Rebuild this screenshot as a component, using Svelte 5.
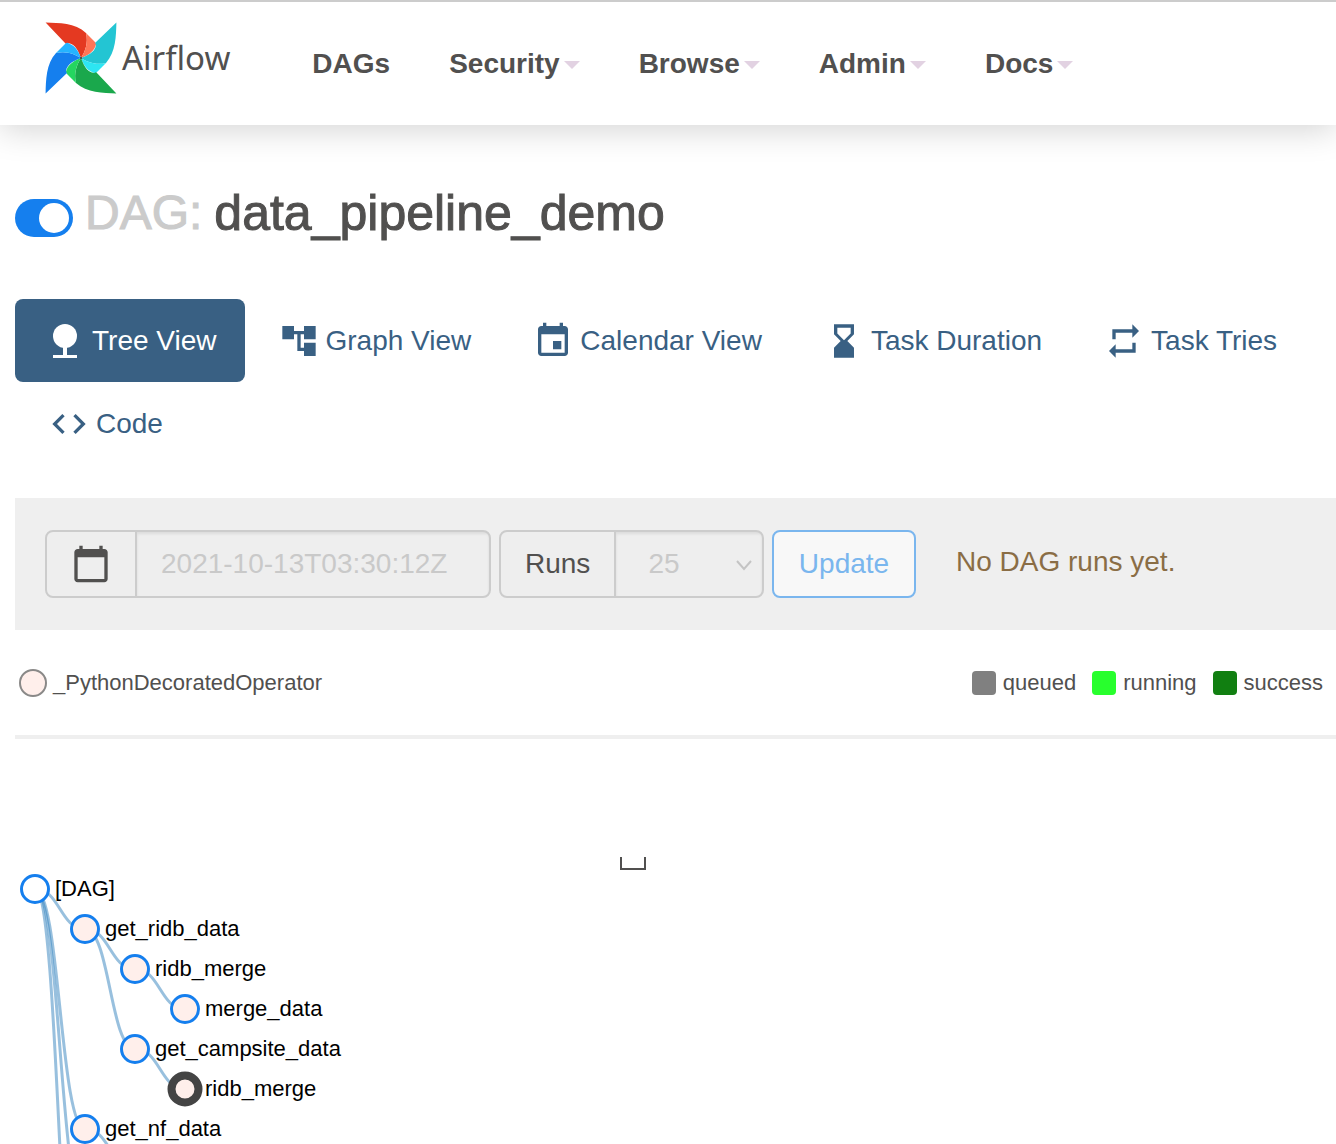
<script>
  const menus = [
    { label: 'DAGs', caret: false },
    { label: 'Security', caret: true },
    { label: 'Browse', caret: true },
    { label: 'Admin', caret: true },
    { label: 'Docs', caret: true },
  ];

  const blades = [
    { angle: 0, dark: '#e43921', light: '#ff7557' },
    { angle: 90, dark: '#23c5d3', light: '#2de5f2' },
    { angle: 180, dark: '#1aa84c', light: '#24d660' },
    { angle: 270, dark: '#157fee', light: '#25b4ff' },
  ];

  const tabs = [
    { id: 'tree', label: 'Tree View', active: true },
    { id: 'graph', label: 'Graph View' },
    { id: 'calendar', label: 'Calendar View' },
    { id: 'duration', label: 'Task Duration' },
    { id: 'tries', label: 'Task Tries' },
    { id: 'code', label: 'Code' },
  ];

  const states = [
    { label: 'queued', kind: 'queued' },
    { label: 'running', kind: 'running' },
    { label: 'success', kind: 'success' },
  ];

  // Tree layout: 50px per depth level, 40px per row.
  const nodes = [
    { label: '[DAG]', depth: 0, row: 0, kind: 'root' },
    { label: 'get_ridb_data', depth: 1, row: 1 },
    { label: 'ridb_merge', depth: 2, row: 2 },
    { label: 'merge_data', depth: 3, row: 3 },
    { label: 'get_campsite_data', depth: 2, row: 4 },
    { label: 'ridb_merge', depth: 3, row: 5, kind: 'collapsed' },
    { label: 'get_nf_data', depth: 1, row: 6 },
  ];
  const edges = [
    [0, 0, 1], [0, 0, 6], [0, 0, 8], [0, 0, 13],
    [1, 1, 2], [1, 1, 4], [2, 2, 3], [2, 4, 5], [1, 6, 7],
  ];
  const x = (depth) => 20 + depth * 50;
  const y = (row) => 150 + row * 40;
  const link = ([depth, from, to]) => {
    const mid = x(depth) + 25;
    return `M${x(depth)} ${y(from)}C${mid} ${y(from)} ${mid} ${y(to)} ${x(depth + 1)} ${y(to)}`;
  };

  let enabled = $state(true);
</script>

<nav class="navbar">
  <a class="brand" href="#home">
    <svg width="72" height="72" viewBox="-36 -36 72 72" aria-hidden="true">
      {#each blades as b}
        <g transform="rotate({b.angle})">
          <path fill={b.dark} d="M-35.4-35.4C-22-35-6-35 5-25C7.500-15 4-6 0 0C-2-5-5-14-13-15Q-14-15-15-14Z" />
          <path fill={b.light} d="M5-25L14-16Q16-14 14.500-12C12-5 5-2 0 0C4-6 7.500-15 5-25Z" />
        </g>
      {/each}
      <circle r="1.200" fill="#51504f" />
    </svg>
    <span>Airflow</span>
  </a>
  <ul class="menu">
    {#each menus as m}
      <li><a href="#{m.label}">{m.label}{#if m.caret}<b class="caret"></b>{/if}</a></li>
    {/each}
  </ul>
</nav>

<main>
  <h1>
    <input class="switch" type="checkbox" role="switch" aria-label="Pause or unpause DAG" bind:checked={enabled} />
    <span class="kind">DAG:</span>
    <span>data_pipeline_demo</span>
  </h1>

  <ul class="tabs">
    {#each tabs as t}
      <li>
        <a class="tab" class:active={t.active} href="#{t.id}">
          {#if t.id === 'tree'}
            <svg width="36" height="40" viewBox="0 0 36 40"><circle cx="16" cy="15" r="12" /><path d="M14 24h4v10h10v3H4v-3h10z" /></svg>
          {:else if t.id === 'graph'}
            <svg width="40" height="40" viewBox="0 0 24 24"><path d="M22 11V3h-7v3H9V3H2v8h7V8h2v10h4v3h7v-8h-7v3h-2V8h2v3z" /></svg>
          {:else if t.id === 'calendar'}
            <svg width="40" height="40" viewBox="0 0 24 24"><path d="M17 12h-5v5h5v-5zM16 1v2H8V1H6v2H5c-1.110 0-1.990.9-1.990 2L3 19c0 1.100.89 2 2 2h14c1.100 0 2-.9 2-2V5c0-1.100-.9-2-2-2h-1V1h-2zm3 18H5V8h14v11z" /></svg>
          {:else if t.id === 'duration'}
            <svg width="40" height="40" viewBox="0 0 24 24"><path d="M18 22l-.01-6L14 12l3.990-4.010L18 2H6v6l4 4-4 3.990V22h12zM8 7.500V4h8v3.500l-4 4-4-4z" /></svg>
          {:else if t.id === 'tries'}
            <svg width="40" height="40" viewBox="0 0 24 24"><path d="M7 7h10v3l4-4-4-4v3H5v6h2V7zm10 10H7v-3l-4 4 4 4v-3h12v-6h-2v4z" /></svg>
          {:else}
            <svg width="40" height="40" viewBox="0 0 24 24"><path d="M9.400 16.600L4.800 12l4.600-4.600L8 6l-6 6 6 6 1.400-1.400zm5.200 0l4.600-4.600-4.600-4.600L16 6l6 6-6 6-1.400-1.400z" /></svg>
          {/if}
          {t.label}
        </a>
      </li>
    {/each}
  </ul>

  <form class="filters">
    <div class="group date">
      <label class="addon" for="base-date" aria-label="Base date">
        <svg width="40" height="40" viewBox="0 0 24 24"><path d="M20 3h-1V1h-2v2H7V1H5v2H4c-1.100 0-2 .9-2 2v16c0 1.100.9 2 2 2h16c1.100 0 2-.9 2-2V5c0-1.100-.9-2-2-2zm0 18H4V8h16v13z" /></svg>
      </label>
      <input id="base-date" type="text" value="2021-10-13T03:30:12Z" disabled />
    </div>
    <div class="group runs">
      <label class="addon" for="num-runs">Runs</label>
      <div class="pick">
        <select id="num-runs" disabled><option>25</option></select>
        <svg width="18" height="12" viewBox="0 0 18 12"><path d="M2 2l7 8 7-8" /></svg>
      </div>
    </div>
    <button type="button" disabled>Update</button>
    <p>No DAG runs yet.</p>
  </form>

  <div class="legend">
    <span class="operator"><i class="dot"></i>_PythonDecoratedOperator</span>
    <ul class="states">
      {#each states as s}
        <li><i class="swatch {s.kind}"></i>{s.label}</li>
      {/each}
    </ul>
  </div>

  <svg class="tree" width="100%" height="405">
    <path class="axis" d="M606 118v12h24v-12" />
    {#each edges as e}
      <path class="link" d={link(e)} />
    {/each}
    {#each nodes as n}
      <circle class="node {n.kind ?? ''}" cx={x(n.depth)} cy={y(n.row)} r="13.500" />
      <text x={x(n.depth) + 20} y={y(n.row) + 7}>{n.label}</text>
    {/each}
  </svg>
</main>

<style>
  :global(body) {
    background: #fff;
    color: #51504f;
    font-family: 'Liberation Sans', Helvetica, Arial, sans-serif;
    font-size: 28px;
    line-height: 40px;
  }
  ul {
    list-style: none;
    margin: 0;
    padding: 0;
  }
  a {
    color: inherit;
    text-decoration: none;
  }
  .navbar {
    display: flex;
    align-items: center;
    height: 123px;
    padding-left: 45px;
    border-top: 2px solid #ccc;
    background: #fff;
    box-shadow: 0 4px 32px rgba(0, 0, 0, 0.18);
  }
  .brand {
    display: flex;
    align-items: center;
    gap: 5px;
    margin-bottom: 12px;
    font-family: 'Noto Sans', sans-serif;
    font-size: 33px;
  }
  .menu {
    display: flex;
    margin-left: 53px;
    font-weight: bold;
  }
  .menu a {
    display: flex;
    align-items: center;
    padding: 0 30px 0 29px;
  }
  .caret {
    margin: 3px 0 0 4px;
    border: 8px solid transparent;
    border-top-color: #e2d2e2;
    border-bottom: 0;
  }
  main {
    padding-left: 15px;
  }
  h1 {
    display: flex;
    align-items: center;
    gap: 12px;
    margin: 60px 0 58px;
    font-size: 50px;
    font-weight: normal;
    line-height: 56px;
    -webkit-text-stroke: 1px;
  }
  .kind {
    color: #cbcbcb;
    font-size: 48px;
  }
  .switch {
    display: flex;
    align-items: center;
    box-sizing: border-box;
    width: 58px;
    height: 38px;
    margin: 10px 0 0;
    padding: 4px;
    border-radius: 19px;
    background: #ccc;
    appearance: none;
  }
  .switch::before {
    content: '';
    width: 30px;
    height: 30px;
    border-radius: 50%;
    background: #fff;
  }
  .switch:checked {
    justify-content: flex-end;
    background: #157fee;
  }
  .tabs {
    display: flex;
    flex-wrap: wrap;
    margin-bottom: 33px;
    color: #396083;
  }
  .tab {
    display: flex;
    align-items: center;
    gap: 7px;
    height: 83px;
    padding: 0 28px 0 34px;
    border-radius: 8px;
  }
  .tab svg {
    fill: currentColor;
  }
  .tab.active {
    background: #396083;
    color: #fff;
  }
  .filters {
    display: flex;
    align-items: center;
    gap: 8px;
    padding: 32px 30px;
    background: #efefef;
  }
  .group {
    display: flex;
    box-sizing: border-box;
    height: 68px;
    border: 2px solid #ccc;
    border-radius: 8px;
    background: #eee;
    overflow: hidden;
  }
  .date {
    width: 446px;
  }
  .runs {
    width: 265px;
  }
  .addon {
    display: flex;
    align-items: center;
    justify-content: center;
    flex: none;
    padding: 0 24px;
    border-right: 2px solid #ccc;
  }
  .date .addon svg {
    fill: #51504f;
  }
  .group input,
  .group select {
    flex: 1;
    min-width: 0;
    box-sizing: border-box;
    margin: 0;
    padding: 0 24px;
    border: 0;
    background: transparent;
    box-shadow: inset 0 2px 3px rgba(0, 0, 0, 0.08);
    color: #c9c9c9;
    font: inherit;
    opacity: 1;
    appearance: none;
  }
  .pick {
    flex: 1;
    display: grid;
    align-items: center;
  }
  .group select {
    grid-area: 1 / 1;
    height: 100%;
    padding: 0 32px;
  }
  .pick svg {
    grid-area: 1 / 1;
    justify-self: end;
    margin: 2px 9px 0 0;
    fill: none;
    stroke: #c4c4c4;
    stroke-width: 2;
    pointer-events: none;
  }
  button {
    box-sizing: border-box;
    width: 144px;
    height: 68px;
    padding: 0;
    border: 2px solid #7ab6ee;
    border-radius: 8px;
    background: #f8f8f8;
    color: #7ab6ee;
    font: inherit;
  }
  p {
    margin: 0 0 5px 32px;
    color: #8a6d45;
  }
  .legend {
    display: flex;
    align-items: center;
    justify-content: space-between;
    height: 105px;
    padding: 0 13px 0 4px;
    border-bottom: 4px solid #efefef;
    font-size: 22px;
  }
  .operator,
  .states,
  .states li {
    display: flex;
    align-items: center;
  }
  .operator {
    gap: 6px;
  }
  .states li {
    gap: 7px;
  }
  .states {
    gap: 16px;
  }
  .dot {
    box-sizing: border-box;
    width: 28px;
    height: 28px;
    border: 2px solid #8a8988;
    border-radius: 50%;
    background: #ffefeb;
  }
  .swatch {
    width: 24px;
    height: 24px;
    border-radius: 4px;
  }
  .queued {
    background: #808080;
  }
  .running {
    background: #28ff2d;
  }
  .success {
    background: #117f11;
  }
  .tree {
    display: block;
    font-size: 22px;
  }
  .tree text {
    fill: #000;
  }
  .axis {
    fill: none;
    stroke: #51504f;
    stroke-width: 2;
  }
  .link {
    fill: none;
    stroke: #3182bd;
    stroke-width: 3;
    opacity: 0.5;
  }
  .node {
    fill: #ffefeb;
    stroke: #157fee;
    stroke-width: 3;
  }
  .node.root {
    fill: #fff;
  }
  .node.collapsed {
    stroke: #444;
    stroke-width: 8;
  }
</style>
